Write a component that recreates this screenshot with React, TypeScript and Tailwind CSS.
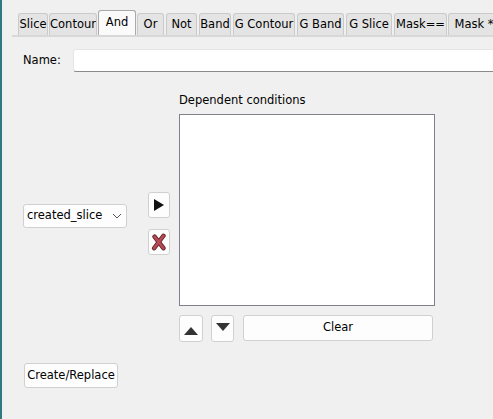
import React from "react";

const tabs: { label: string; cls: string; selected?: boolean }[] = [
  { label: "Slice", cls: "w-[30px] ml-0" },
  { label: "Contour", cls: "w-[48px] ml-[1px]" },
  { label: "And", cls: "w-[38px] ml-[1px]", selected: true },
  { label: "Or", cls: "w-[27px] ml-[1px]" },
  { label: "Not", cls: "w-[31px] ml-[2px]" },
  { label: "Band", cls: "w-[32px] ml-[2px]" },
  { label: "G Contour", cls: "w-[62px] ml-[2px]" },
  { label: "G Band", cls: "w-[47px] ml-[2px]" },
  { label: "G Slice", cls: "w-[46px] ml-[2px]" },
  { label: "Mask==", cls: "w-[53px] ml-[2px]" },
  { label: "Mask *", cls: "w-[52px] ml-[1px]" },
];

function Tab({ label, cls, selected }: { label: string; cls: string; selected?: boolean }) {
  if (selected) {
    return (
      <div
        className={`${cls} shrink-0 h-[25px] bg-[#fafafa] border border-b-0 border-[#a9a9a9] rounded-t-[3px] flex items-start justify-center pt-[3px] overflow-hidden whitespace-nowrap text-[11.5px]`}
      >
        {label}
      </div>
    );
  }
  return (
    <div
      className={`${cls} shrink-0 h-[22px] bg-[#e4e4e4] border border-b-0 border-[#cacaca] rounded-t-[3px] flex items-center justify-center pt-[1px] overflow-hidden whitespace-nowrap text-[11.5px]`}
    >
      {label}
    </div>
  );
}

function SmallButton({ className, children }: { className: string; children: React.ReactNode }) {
  return (
    <div
      className={`${className} shrink-0 bg-[#fdfdfd] border border-[#d0d0d0] rounded-[3px] flex items-center justify-center`}
    >
      {children}
    </div>
  );
}

export default function App() {
  return (
    <div
      className="w-[493px] h-[419px] bg-[#f0f0f0] flex overflow-hidden text-[11px] text-black"
      style={{ fontFamily: '"DejaVu Sans", sans-serif' }}
    >
      <div className="w-[2px] shrink-0 bg-[#2d7b80]" />
      <div className="flex-1 flex flex-col min-w-0">
        {/* tab bar */}
        <div className="pt-[10px] pl-[16px] flex items-end h-[35px] overflow-hidden">
          {tabs.map((t) => (
            <Tab key={t.label} {...t} />
          ))}
        </div>
        <div className="ml-[10px] h-[2px] bg-[#d8d8d8]" />

        {/* name row */}
        <div className="mt-[12px] flex items-center h-[23px]">
          <div className="pl-[21px] w-[71px] shrink-0 text-[11.5px]">Name:</div>
          <div className="flex-1 h-[23px] bg-white border border-[#e6e6e6] border-b-[#8a8a8a] rounded-l-[3px] -mr-[4px]" />
        </div>

        {/* main row */}
        <div className="mt-[21px] flex items-start">
          <div className="pl-[21px] pt-[111px]">
            <div className="w-[104px] h-[24px] bg-[#fdfdfd] border border-[#d0d0d0] rounded-[3px] flex items-center pl-[3px] pr-[4px] text-[11.5px]">
              <span className="flex-1">created_slice</span>
              <svg width="10" height="6" viewBox="0 0 10 6" className="mb-[1px]">
                <path d="M1 1 L5 5 L9 1" fill="none" stroke="#555" strokeWidth="1" />
              </svg>
            </div>
          </div>
          <div className="ml-[21px] pt-[99px] flex flex-col gap-[11px]">
            <SmallButton className="w-[22px] h-[26px]">
              <svg width="12" height="14" viewBox="0 0 12 14">
                <path d="M1 1 L11 7 L1 13 Z" fill="#111" />
              </svg>
            </SmallButton>
            <SmallButton className="w-[22px] h-[26px]">
              <svg width="16" height="18" viewBox="0 0 18 20">
                <path d="M4 4 L14 17 M14 3 L3.5 17" fill="none" stroke="#5e2328" strokeWidth="5" strokeLinecap="round" />
                <path d="M4 4 L14 17 M14 3 L3.5 17" fill="none" stroke="#b84a55" strokeWidth="3" strokeLinecap="round" />
              </svg>
            </SmallButton>
          </div>
          <div className="ml-[9px] flex flex-col">
            <div className="h-[14px] leading-[14px] text-[11.5px]">Dependent conditions</div>
            <div className="mt-[7px] w-[256px] h-[192px] bg-white border border-[#80808a]" />
            <div className="mt-[9px] flex items-start">
              <SmallButton className="w-[24px] h-[27px]">
                <svg width="16" height="10" viewBox="0 0 16 10" className="mt-[4px]">
                  <path d="M8 1 L15 9 L1 9 Z" fill="#333" />
                </svg>
              </SmallButton>
              <SmallButton className="ml-[8px] w-[23px] h-[27px]">
                <svg width="16" height="10" viewBox="0 0 16 10" className="mb-[4px]">
                  <path d="M1 1 L15 1 L8 9 Z" fill="#333" />
                </svg>
              </SmallButton>
              <SmallButton className="ml-[9px] w-[190px] h-[26px] text-[11.5px]">Clear</SmallButton>
            </div>
          </div>
        </div>

        <div className="mt-[21px] pl-[22px]">
          <SmallButton className="w-[94px] h-[25px] text-[11.5px]">Create/Replace</SmallButton>
        </div>
      </div>
    </div>
  );
}
